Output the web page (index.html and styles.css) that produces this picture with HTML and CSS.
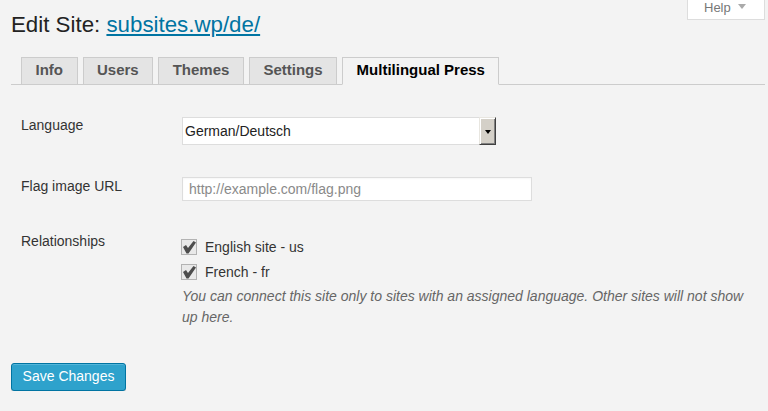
FILE: index.html
```html
<!DOCTYPE html>
<html lang="en">
<head>
<meta charset="utf-8">
<title>Edit Site</title>
<link rel="stylesheet" href="styles.css">
</head>
<body>
<div class="wrap">
  <div class="header">
    <h2 class="title">Edit Site: <a href="#" class="site-link">subsites.wp/de/</a></h2>
    <button type="button" class="help">Help <span class="help-tri"></span></button>
  </div>
  <nav class="tabs">
    <a href="#" class="tab">Info</a>
    <a href="#" class="tab">Users</a>
    <a href="#" class="tab">Themes</a>
    <a href="#" class="tab">Settings</a>
    <a href="#" class="tab active">Multilingual Press</a>
  </nav>
  <form class="form">
    <div class="form-table">
      <div class="row row-lang">
        <label class="lbl">Language</label>
        <div class="field">
          <div class="select">
            <select class="sel"><option>German/Deutsch</option></select>
            <span class="sel-btn"><span class="sel-tri"></span></span>
          </div>
        </div>
      </div>
      <div class="row row-flag">
        <label class="lbl">Flag image URL</label>
        <div class="field">
          <input type="text" class="text-input" placeholder="http://example.com/flag.png">
        </div>
      </div>
      <div class="row row-rel">
        <label class="lbl">Relationships</label>
        <div class="field field-rel">
          <label class="check-item">
            <svg class="cb" width="16" height="16" viewBox="0 0 16 16"><rect x="0.5" y="0.5" width="15" height="15" fill="#e9e9e9" stroke="#b3b3b3"/><path d="M2 8 L5 6 L7 9 L12.5 2 L15 3.5 L7.5 14.5 L5.5 14.5 Z" fill="#4d4d4d"/></svg>
            <span>English site - us</span>
          </label>
          <label class="check-item">
            <svg class="cb" width="16" height="16" viewBox="0 0 16 16"><rect x="0.5" y="0.5" width="15" height="15" fill="#e9e9e9" stroke="#b3b3b3"/><path d="M2 8 L5 6 L7 9 L12.5 2 L15 3.5 L7.5 14.5 L5.5 14.5 Z" fill="#4d4d4d"/></svg>
            <span>French - fr</span>
          </label>
          <p class="description">You can connect this site only to sites with an assigned language. Other sites will not show up here.</p>
        </div>
      </div>
    </div>
    <p class="submit"><button type="submit" class="primary">Save Changes</button></p>
  </form>
</div>
</body>
</html>
```
FILE: styles.css
```css
html, body {
  margin: 0;
  padding: 0;
  background: #f3f3f3;
}
body {
  font-family: "Liberation Sans", Arial, sans-serif;
  color: #333;
  font-size: 14px;
}
.wrap {
  padding: 0 3px 0 11px;
}
.header {
  display: flex;
  align-items: flex-start;
}
.title {
  flex: 1;
  margin: 10px 0 0;
  font-size: 22.3px;
  font-weight: 400;
  line-height: 30px;
  color: #222;
}
.site-link {
  color: #0074a2;
  text-decoration: underline;
}
.help {
  box-sizing: border-box;
  width: 78px;
  height: 20px;
  margin: 0;
  padding: 0 0 3px 16px;
  border: 1px solid #ddd;
  border-top: 0;
  background: #fff;
  font-family: "Liberation Sans", Arial, sans-serif;
  font-size: 13px;
  line-height: 16px;
  color: #777;
  text-align: left;
  display: flex;
  align-items: flex-start;
}
.help-tri {
  width: 0;
  height: 0;
  margin: 4px 0 0 7px;
  border-left: 4px solid transparent;
  border-right: 4px solid transparent;
  border-top: 5px solid #aaa;
}
.tabs {
  display: flex;
  gap: 5px;
  margin-top: 17px;
  padding-left: 10px;
  border-bottom: 1px solid #ccc;
  height: 27px;
}
.tab {
  box-sizing: border-box;
  height: 28px;
  padding: 0 13.5px;
  border: 1px solid #ccc;
  background: #e4e4e4;
  color: #555;
  font-size: 15px;
  font-weight: 700;
  line-height: 24px;
  text-decoration: none;
  white-space: nowrap;
}
.tab.active {
  background: #f3f3f3;
  color: #000;
  border-bottom-color: #f3f3f3;
}
.form-table {
  padding-left: 10px;
}
.row {
  display: grid;
  grid-template-columns: 161px 1fr;
  align-items: start;
}
.row-lang { margin-top: 31px; }
.row-flag { margin-top: 32px; }
.row-rel { margin-top: 31px; }
.lbl {
  font-size: 14px;
  line-height: 18px;
  color: #333;
}
.select {
  box-sizing: border-box;
  display: flex;
  width: 314px;
  height: 28px;
  margin-top: 1px;
  border: 1px solid #ddd;
  border-right: 0;
  background: #fff;
}
.sel {
  flex: 1;
  appearance: none;
  -webkit-appearance: none;
  border: 0;
  background: transparent;
  height: 26px;
  padding: 0 0 0 2px;
  margin: 0;
  font-family: "Liberation Sans", Arial, sans-serif;
  font-size: 14px;
  color: #222;
  outline: none;
}
.sel-btn {
  box-sizing: border-box;
  width: 17px;
  margin: -1px 0;
  border: 1px solid;
  border-color: #e8e6e0 #404040 #404040 #e8e6e0;
  box-shadow: inset 1px 1px 0 #fff, inset -1px -1px 0 #808080;
  background: #d4d0c8;
  display: flex;
  align-items: center;
  justify-content: center;
}
.sel-tri {
  width: 0;
  height: 0;
  border-left: 3px solid transparent;
  border-right: 3px solid transparent;
  border-top: 4px solid #000;
  margin-top: 1px;
}
.text-input {
  box-sizing: border-box;
  display: block;
  width: 350px;
  height: 24px;
  margin: 0;
  padding: 0 6px;
  border: 1px solid #ddd;
  background: #fff;
  box-shadow: inset 0 1px 2px rgba(0,0,0,.04);
  font-family: "Liberation Sans", Arial, sans-serif;
  font-size: 14px;
  color: #333;
}
.text-input::placeholder {
  color: #8a8a8a;
}
.field-rel {
  padding-top: 2px;
}
.check-item {
  display: flex;
  align-items: center;
  height: 25px;
  margin-left: -1px;
  font-size: 14px;
  line-height: 18px;
  color: #333;
}
.cb {
  display: block;
  flex: none;
  margin-right: 8px;
}
.description {
  max-width: 572px;
  margin: 2px 0 0;
  font-size: 14px;
  line-height: 21px;
  font-style: italic;
  color: #666;
}
.submit {
  margin: 35px 0 0;
  padding: 0;
}
.primary {
  box-sizing: border-box;
  width: 115px;
  height: 28px;
  margin: 0;
  padding: 0 0 2px;
  border: 1px solid #0074a2;
  border-radius: 3px;
  background: #2ea2cc;
  box-shadow: inset 0 1px 0 rgba(120,200,230,.5), 0 1px 0 rgba(0,0,0,.15);
  color: #fff;
  font-family: "Liberation Sans", Arial, sans-serif;
  font-size: 14px;
  line-height: 24px;
}
```
